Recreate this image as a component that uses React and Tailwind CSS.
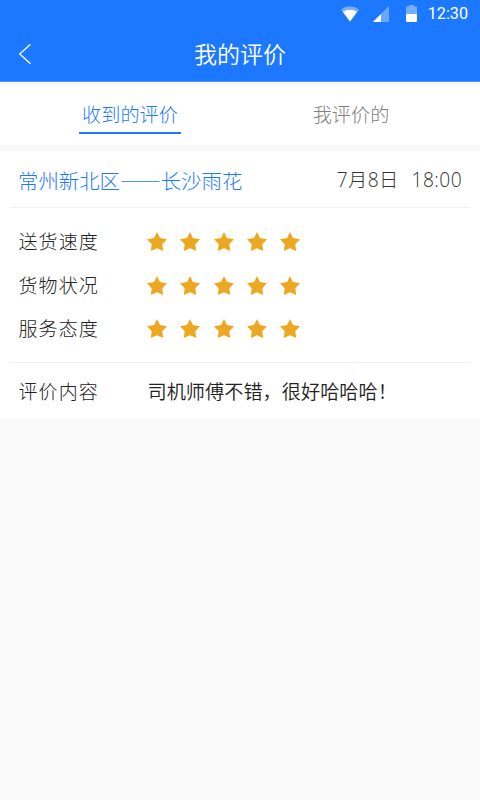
import { useState } from 'react';

const TABS = [
  { id: 'received', label: '收到的评价' },
  { id: 'given', label: '我评价的' },
];

const REVIEW = {
  route: '常州新北区——长沙雨花',
  date: '7月8日',
  time: '18:00',
  ratings: [
    { label: '送货速度', score: 5 },
    { label: '货物状况', score: 5 },
    { label: '服务态度', score: 5 },
  ],
  comment: '司机师傅不错，很好哈哈哈！',
};

export default function App() {
  const [tab, setTab] = useState('received');

  return (
    <main lang="zh-CN" className="h-screen overflow-hidden bg-[#f9f9f9] font-['Noto_Sans_CJK_SC',sans-serif] font-light">
      <header className="h-[82px] border-b border-[#4a93f8] bg-[#1c79ff] text-white">
        <StatusBar />
        <div className="grid h-[52px] grid-cols-[60px_1fr_60px] items-center">
          <button type="button" aria-label="返回" className="pt-[2px] pl-[18px]">
            <svg width="14" height="22" viewBox="0 0 14 22" fill="none" stroke="currentColor" strokeWidth="1.3">
              <path d="M12.5 1.2 1.7 11l10.8 9.8" />
            </svg>
          </button>
          <h1 className="text-center text-[23px] leading-[52px] font-[350]">我的评价</h1>
        </div>
      </header>

      <nav className="mt-[5px] grid h-[58px] grid-cols-[260px_182px] bg-white">
        {TABS.map(({ id, label }) => (
          <button
            key={id}
            type="button"
            onClick={() => setTab(id)}
            className={tab === id ? 'flex justify-center text-[#1c79ff]' : 'flex justify-center text-[#808080]'}
          >
            <span
              className={`h-[47px] px-[3px] text-[19.2px] leading-[54px] ${tab === id ? 'border-b-2 border-[#1c79ff]' : ''}`}
            >
              {label}
            </span>
          </button>
        ))}
      </nav>

      <section className="mt-[6px] h-[268px] bg-white px-[10px]">
        <div className="flex h-[57px] items-center justify-between border-b border-[#f1f1f1] px-2 pt-[2px]">
          <span className="text-[20.4px] text-[#1c79ff] [font-feature-settings:'fwid']">{REVIEW.route}</span>
          <span className="flex gap-[13px] pt-px font-['Open_Sans','Noto_Sans_CJK_SC',sans-serif] text-[19.2px] tracking-[0.4px] text-[#333]">
            <span>{REVIEW.date}</span>
            <span>{REVIEW.time}</span>
          </span>
        </div>

        <div className="h-[155px] border-b border-[#f1f1f1] px-2 pt-[12px]">
          {REVIEW.ratings.map(({ label, score }) => (
            <div key={label} className="flex h-[43.5px] items-center">
              <span className="w-[129px] pb-px pl-[0.5px] text-[19px] tracking-[1.1px] text-[#222]">{label}</span>
              <Stars count={score} />
            </div>
          ))}
        </div>

        <div className="flex h-[56px] items-center px-2">
          <span className="w-[129.5px] pl-[0.5px] text-[19px] tracking-[1.1px] text-[#222]">评价内容</span>
          <p className="text-[19.2px] font-[350] text-[#222]">{REVIEW.comment}</p>
        </div>
      </section>
    </main>
  );
}

function StatusBar() {
  return (
    <div className="flex h-[27px] items-center justify-end pr-[12px]">
      <svg width="18" height="16" viewBox="0 0 18 16" fill="currentColor">
        <path d="M0 3.500Q9-3 18 3.500L9 15.500Z" opacity=".4" />
        <path d="M1.800 5.800Q9 1.500 16.200 5.800L9 15.500Z" />
      </svg>
      <svg width="16" height="16" viewBox="0 0 16 16" fill="currentColor" className="ml-[14px]">
        <path d="M16 0v16H0Z" opacity=".35" />
        <path d="M8 8v8H0Z" />
      </svg>
      <svg width="11" height="17" viewBox="0 0 11 17" fill="currentColor" className="ml-[17px]">
        <path d="M3 0h5v1.500h2a1 1 0 0 1 1 1V9H0V2.500a1 1 0 0 1 1-1h2Z" opacity=".4" />
        <path d="M0 9h11v7a1 1 0 0 1-1 1H1a1 1 0 0 1-1-1Z" />
      </svg>
      <span className="ml-[11px] pt-px font-['Roboto',sans-serif] text-[16.2px] font-normal">12:30</span>
    </div>
  );
}

function Stars({ count }) {
  return (
    <div className="flex gap-[13.3px]">
      {Array.from({ length: count }, (_, i) => (
        <svg key={i} width="20" height="19" viewBox="0 0 20 19" fill="#eca822">
          <path d="M10 0 13 6.100 20 7.300 15.300 12.200 16.200 19 10 16.200 3.800 19 4.700 12.200 0 7.300 7 6.100Z" />
        </svg>
      ))}
    </div>
  );
}
